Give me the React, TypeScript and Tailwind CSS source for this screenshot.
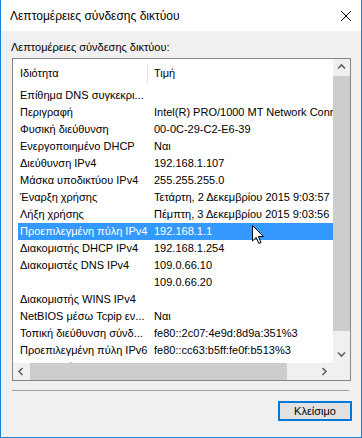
import React from "react";

const rows: [string, string][] = [
  ["Επίθημα DNS συγκεκρι...", ""],
  ["Περιγραφή", "Intel(R) PRO/1000 MT Network Connection"],
  ["Φυσική διεύθυνση", "00-0C-29-C2-E6-39"],
  ["Ενεργοποιημένο DHCP", "Ναι"],
  ["Διεύθυνση IPv4", "192.168.1.107"],
  ["Μάσκα υποδικτύου IPv4", "255.255.255.0"],
  ["Έναρξη χρήσης", "Τετάρτη, 2 Δεκεμβρίου 2015 9:03:57 μμ"],
  ["Λήξη χρήσης", "Πέμπτη, 3 Δεκεμβρίου 2015 9:03:56 μμ"],
  ["Προεπιλεγμένη πύλη IPv4", "192.168.1.1"],
  ["Διακομιστής DHCP IPv4", "192.168.1.254"],
  ["Διακομιστές DNS IPv4", "109.0.66.10"],
  ["", "109.0.66.20"],
  ["Διακομιστής WINS IPv4", ""],
  ["NetBIOS μέσω Tcpip εν...", "Ναι"],
  ["Τοπική διεύθυνση σύνδ...", "fe80::2c07:4e9d:8d9a:351%3"],
  ["Προεπιλεγμένη πύλη IPv6", "fe80::cc63:b5ff:fe0f:b513%3"],
  ["Διακομιστές DNS IPv6", ""],
];

function Chevron({ dir }: { dir: "up" | "down" | "left" | "right" }) {
  const paths: Record<string, string> = {
    up: "M1 5.5 L4.5 2 L8 5.5",
    down: "M1 2.5 L4.5 6 L8 2.5",
    left: "M5.5 1 L2 4.5 L5.5 8",
    right: "M2.5 1 L6 4.5 L2.5 8",
  };
  return (
    <svg width="9" height="9" viewBox="0 0 9 9">
      <path d={paths[dir]} fill="none" stroke="#606060" strokeWidth="1.6" />
    </svg>
  );
}

export default function App() {
  return (
    <div
      className="relative w-[362px] h-[438px] flex flex-col bg-[#f0f0f0] border-l border-r border-b border-[#1883d7] text-[11px] text-black overflow-hidden"
      style={{ fontFamily: '"Liberation Sans", Arial, sans-serif' }}
    >
      {/* Title bar */}
      <div className="h-[31px] shrink-0 bg-white flex items-center justify-between pl-[9px] pr-[8px]">
        <span className="leading-none text-[12px]">Λεπτομέρειες σύνδεσης δικτύου</span>
        <svg width="12" height="12" viewBox="0 0 12 12" className="mr-[1px]">
          <path d="M1 1 L11 11 M11 1 L1 11" stroke="#000" strokeWidth="1" />
        </svg>
      </div>

      {/* Body */}
      <div className="flex flex-col pl-[11px]">
        <div className="h-[27px] flex items-end pb-[5px] leading-none">
          <span className="ml-[-1px]">Λεπτομέρειες σύνδεσης δικτύου:</span>
        </div>

        {/* Listbox */}
        <div className="w-[339px] h-[323px] border border-[#828790] bg-white flex flex-col">
          <div className="flex h-[304px]">
            {/* main list area */}
            <div className="w-[320px] h-[304px] overflow-hidden pl-[5px]">
              <div className="h-[28px] flex items-center">
                <div className="w-[129px] pl-[2px] whitespace-nowrap">Ιδιότητα</div>
                <div className="w-[1px] h-[21px] bg-[#e5e5e5]" />
                <div className="pl-[6px] whitespace-nowrap">Τιμή</div>
              </div>
              {rows.map(([k, v], i) => (
                <div
                  key={i}
                  className={
                    i === 8
                      ? "h-[17px] flex items-center bg-[#3399ff] text-white whitespace-nowrap"
                      : "h-[17px] flex items-center whitespace-nowrap"
                  }
                >
                  <div className="w-[134px] shrink-0 pl-[2px] overflow-hidden">{k}</div>
                  <div className="pl-[2px]">{v}</div>
                </div>
              ))}
            </div>
            {/* vertical scrollbar */}
            <div className="w-[17px] h-[304px] bg-[#f0f0f0] flex flex-col">
              <div className="h-[17px] flex items-center justify-center">
                <Chevron dir="up" />
              </div>
              <div className="h-[255px] bg-[#cdcdcd]" />
              <div className="h-[15px]" />
              <div className="h-[17px] flex items-center justify-center">
                <Chevron dir="down" />
              </div>
            </div>
          </div>
          {/* horizontal scrollbar */}
          <div className="flex h-[17px]">
            <div className="w-[320px] h-[17px] bg-[#f0f0f0] flex">
              <div className="w-[17px] flex items-center justify-center">
                <Chevron dir="left" />
              </div>
              <div className="w-[257px] bg-[#cdcdcd]" />
              <div className="w-[29px]" />
              <div className="w-[17px] flex items-center justify-center">
                <Chevron dir="right" />
              </div>
            </div>
            <div className="w-[17px] h-[17px] bg-[#f0f0f0]" />
          </div>
        </div>

        {/* separator */}
        <div className="mt-[9px] w-[337px] h-[1px] bg-[#a0a0a0]" />

        {/* button row */}
        <div className="flex justify-end pr-[9px] mt-[10px]">
          <button className="w-[74px] h-[20px] bg-[#e1e1e1] border-2 border-[#0078d7] flex items-center justify-center leading-none">
            Κλείσιμο
          </button>
        </div>
      </div>

      {/* mouse cursor overlay */}
      <svg
        className="absolute left-[251px] top-[225px]"
        width="13"
        height="20"
        viewBox="0 0 13 20"
      >
        <path
          d="M0.5 0.5 L0.5 16 L4.2 12.4 L6.8 18.5 L9 17.5 L6.4 11.6 L11.5 11.6 Z"
          fill="#fff"
          stroke="#000"
          strokeWidth="1"
          strokeLinejoin="miter"
        />
      </svg>
    </div>
  );
}
